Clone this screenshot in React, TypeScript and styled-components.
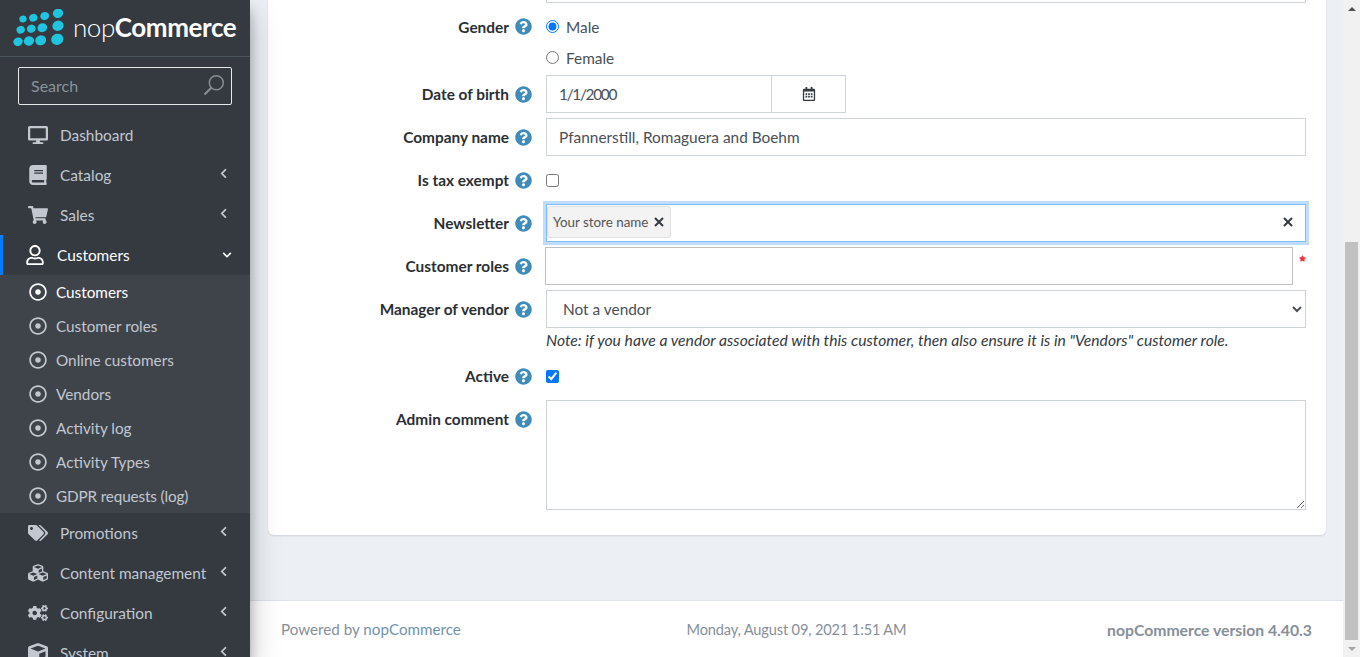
import React from 'react';
import styled, { createGlobalStyle } from 'styled-components';
import {
  FaDesktop, FaBook, FaShoppingCart, FaRegUser, FaRegDotCircle, FaTags, FaCubes, FaCogs, FaCube,
  FaChevronLeft, FaChevronDown, FaQuestionCircle, FaRegCalendarAlt, FaStar,
} from 'react-icons/fa';

const Global = createGlobalStyle`
  html, body { margin: 0; height: 100%; overflow: hidden; }
  body { font-family: "Lato", "Open Sans", sans-serif; font-size: 16px; color: #212529; background: #ecf0f5; }
  * { box-sizing: border-box; }
`;

const Shell = styled.div`display: flex; width: 1360px; height: 657px; overflow: hidden;`;
const Sidebar = styled.aside`
  width: 250px; flex: none; height: 657px; overflow: hidden; background: #343a40; color: #c2c7d0; z-index: 2;
  box-shadow: 0 14px 28px rgba(0,0,0,.25), 0 10px 10px rgba(0,0,0,.22);
`;
const Brand = styled.div`height: 57px; display: flex; align-items: center; padding-left: 13px; border-bottom: 1px solid #4b545c;`;
const BrandText = styled.span`
  font-size: 26px; color: #fff; font-weight: 300; letter-spacing: -.43px; margin: 0 0 3px 6px; line-height: 1;
  b { font-weight: 700; }
`;
const SearchBox = styled.div`
  margin: 10px 18px 10px; height: 38px; border: 1px solid #e6e8ea; border-radius: 2px; display: flex; align-items: center;
  justify-content: space-between; padding: 0 6px 2px 12px; color: #8a929a; font-size: 16px;
`;
const MenuRow = styled.div<{ $open?: boolean }>`
  height: 40px; display: flex; align-items: center; padding: 0 ${p => p.$open ? 18 : 21}px 0 ${p => p.$open ? 25 : 28}px;
  color: ${p => p.$open ? '#fff' : '#c2c7d0'};
  ${p => p.$open && 'box-shadow: inset 3px 0 0 #007bff;'}
`;
const MenuIcon = styled.span`width: 32px; flex: none; display: flex; align-items: center; font-size: 20px;`;
const MenuLabel = styled.span`flex: 1; white-space: nowrap; font-size: 15.4px;`;
const Caret = styled.span<{ $down?: boolean }>`
  display: flex; font-size: ${p => p.$down ? 10 : 11}px; color: ${p => p.$down ? '#fff' : '#c2c7d0'}; margin-top: ${p => p.$down ? 0 : -4}px;
`;
const SubMenu = styled.div`background: #3f444b;`;
const SubRow = styled.div<{ $active?: boolean }>`
  height: 34px; display: flex; align-items: center; padding-left: 29px; gap: 9px; font-size: 15.3px;
  color: ${p => p.$active ? '#fff' : '#c2c7d0'};
  svg { font-size: 18px; flex: none; }
`;
const SubText = styled.span<{ $tight?: boolean }>`
  ${p => p.$tight && 'letter-spacing: -.15px;'}
`;

const Main = styled.main`flex: 1; min-width: 0; display: flex; flex-direction: column; height: 657px;`;
const Content = styled.div`flex: 1; min-height: 0; overflow: hidden; display: flex; flex-direction: column; justify-content: flex-end; padding: 0 17px 65px 18px;`;
const Card = styled.section`
  flex: none; background: #fff; border-radius: 0 0 6px 6px; box-shadow: 0 1px 2px rgba(0,0,0,.12);
  padding: 0 20px 25px 0; display: flex; flex-direction: column;
`;
const Row = styled.div<{ $mb?: number }>`
  display: grid; grid-template-columns: 278px 1fr; margin-bottom: ${p => p.$mb ?? 5}px;
`;
const LabelCell = styled.div<{ $h?: number }>`
  height: ${p => p.$h ?? 38}px; display: flex; align-items: center; justify-content: flex-end; padding-right: 14px; gap: 6px;
  font-weight: 700; font-size: 15.4px; color: #2b2f33; white-space: nowrap;
  svg { color: #3f8cba; font-size: 17px; flex: none; }
`;
const Field = styled.div`min-width: 0; display: flex; flex-direction: column;`;
const Input = styled.div`
  height: 38px; border: 1px solid #ced4da; background: #fff; padding: 0 12px; display: flex; align-items: center;
  font-size: 15.4px; color: #495057;
`;
const RadioLine = styled.label`height: 31px; display: flex; align-items: center; gap: 7px; font-size: 15.4px; color: #495057;`;
const Native = styled.input`margin: 0; width: 13px; height: 13px; flex: none;`;
const CheckCell = styled.div`height: 38px; display: flex; align-items: center;`;
const DateGroup = styled.div`display: flex; width: 300px;`;
const DateInput = styled(Input)`flex: 1; border-right: 0; letter-spacing: -1.3px;`;
const DateBtn = styled.div`
  width: 75px; height: 38px; border: 1px solid #ced4da; display: flex; align-items: center; justify-content: center;
  font-size: 14px; color: #343a40;
`;
const Tagged = styled.div`
  height: 38px; border: 1px solid #80bdff; box-shadow: 0 0 0 3px rgba(0,123,255,.25); display: flex; align-items: center;
  justify-content: space-between; padding: 0 12px 2px 0; background: #fff;
`;
const Chip = styled.span`
  height: 32px; display: inline-flex; align-items: center; gap: 6px; padding: 0 6px 0 5px; font-size: 13.4px; color: #555;
  background: #f3f3f3; border: 1px solid #e1e1e1; border-radius: 3px;
`;
const RolesLine = styled.div`display: flex; gap: 6px;`;
const RolesBox = styled.div`width: 748px; margin-left: -1px; height: 38px; border: 1px solid #bfbfbf; background: #fff;`;
const Star = styled.span`color: #ff2a3c; font-size: 7px; line-height: 1; margin-top: 8px; display: flex;`;
const Select = styled.select`
  height: 38px; width: 100%; border: 1px solid #ced4da; background: #fff; padding: 0 6px 0 12px; font: inherit; font-size: 15.4px; color: #495057; border-radius: 0;
`;
const Note = styled.em`font-size: 15.7px; line-height: 24px; color: #343a40; margin-bottom: 5px; white-space: nowrap;`;
const TextArea = styled.textarea`height: 110px; width: 100%; display: block; border: 1px solid #ced4da; background: #fff; padding: 6px 12px; font: inherit;`;

const Footer = styled.footer`
  height: 57px; flex: none; background: #fff; border-top: 1px solid #dee2e6; padding: 0 31px; display: grid;
  grid-template-columns: 1fr auto 1fr; align-items: center; color: #869099; font-size: 15.2px;
  a { color: #6f93ad; }
`;
const FootDate = styled.span`font-size: 14.6px; letter-spacing: -.15px;`;
const FootRight = styled.strong`justify-self: end; font-weight: 700; font-size: 15.75px;`;

const Scrollbar = styled.div`
  width: 17px; flex: none; height: 657px; background: #f1f1f1; display: flex; flex-direction: column; padding: 0 2px;
`;
const ScrollArrow = styled.div<{ $down?: boolean }>`
  height: 17px; flex: none; display: flex; align-items: center; justify-content: center;
  &::before {
    content: ''; width: 0; height: 0; border-left: 4px solid transparent; border-right: 4px solid transparent;
    ${p => p.$down ? 'border-top: 4px solid #a3a3a3;' : 'border-bottom: 4px solid #505050;'}
  }
`;
const ScrollTrack = styled.div`flex: 1; display: flex; flex-direction: column; justify-content: flex-end;`;
const ScrollThumb = styled.div`height: 398px; background: #c1c1c1;`;

const dots = [
  [23, 19, 3.7], [33.3, 17.7, 4.2], [44.7, 16, 4.5], [58, 13.3, 5.2],
  [20.7, 29.7, 4.2], [31.3, 28.7, 4.5], [42.3, 27.7, 4.9], [58, 25.7, 5.7],
  [18, 41.7, 4.7], [29, 41, 5.2], [40.7, 40.3, 5.5], [57.3, 39.3, 6.2],
];
const Logo = () => (
  <svg width="54" height="38" viewBox="13 9 54 38" aria-hidden="true">
    <g fill="#1fc5df">
      {dots.map(([x, y, r], i) => <ellipse key={i} cx={x} cy={y} rx={r} ry={r * 0.9} transform={`rotate(-20 ${x} ${y})`} />)}
    </g>
  </svg>
);
const SearchGlyph = () => (
  <svg width="22" height="22" viewBox="0 0 22 22" fill="none" stroke="#8a8f94" strokeWidth="1.4" aria-hidden="true">
    <circle cx="13.3" cy="8.7" r="7" />
    <path d="M8.3 13.7 L1.5 20.5" strokeWidth="2" />
  </svg>
);
const Cross = () => (
  <svg width="10" height="10" viewBox="0 0 10 10" stroke="#343a40" strokeWidth="2" aria-hidden="true">
    <path d="M1 1L9 9M9 1L1 9" />
  </svg>
);

const top = [
  ['Dashboard', FaDesktop, false],
  ['Catalog', FaBook, true],
  ['Sales', FaShoppingCart, true],
] as const;
const bottom = [
  ['Promotions', FaTags],
  ['Content management', FaCubes],
  ['Configuration', FaCogs],
  ['System', FaCube],
] as const;
const subs = ['Customers', 'Customer roles', 'Online customers', 'Vendors', 'Activity log', 'Activity Types', 'GDPR requests (log)'];

const Label = ({ text, h }: { text: string; h?: number }) => (
  <LabelCell $h={h}>{text}<FaQuestionCircle /></LabelCell>
);

export default function App() {
  return (
    <Shell>
      <Global />
      <Sidebar>
        <Brand><Logo /><BrandText>nop<b>Commerce</b></BrandText></Brand>
        <SearchBox>Search<SearchGlyph /></SearchBox>
        {top.map(([t, I, c]) => (
          <MenuRow key={t}><MenuIcon><I /></MenuIcon><MenuLabel>{t}</MenuLabel>{c && <Caret><FaChevronLeft /></Caret>}</MenuRow>
        ))}
        <MenuRow $open><MenuIcon><FaRegUser /></MenuIcon><MenuLabel>Customers</MenuLabel><Caret $down><FaChevronDown /></Caret></MenuRow>
        <SubMenu>
          {subs.map((s, i) => <SubRow key={s} $active={i === 0}><FaRegDotCircle /><SubText $tight={i === 6}>{s}</SubText></SubRow>)}
        </SubMenu>
        {bottom.map(([t, I]) => (
          <MenuRow key={t}><MenuIcon><I /></MenuIcon><MenuLabel>{t}</MenuLabel><Caret><FaChevronLeft /></Caret></MenuRow>
        ))}
      </Sidebar>
      <Main>
        <Content>
          <Card>
            <Row $mb={8}><span /><Field><Input /></Field></Row>
            <Row $mb={2}>
              <Label text="Gender" h={31} />
              <Field>
                <RadioLine><Native type="radio" name="g" defaultChecked />Male</RadioLine>
                <RadioLine><Native type="radio" name="g" />Female</RadioLine>
              </Field>
            </Row>
            <Row>
              <Label text="Date of birth" />
              <Field><DateGroup><DateInput>1/1/2000</DateInput><DateBtn><FaRegCalendarAlt /></DateBtn></DateGroup></Field>
            </Row>
            <Row>
              <Label text="Company name" />
              <Field><Input>Pfannerstill, Romaguera and Boehm</Input></Field>
            </Row>
            <Row>
              <Label text="Is tax exempt" />
              <Field><CheckCell><Native type="checkbox" /></CheckCell></Field>
            </Row>
            <Row>
              <Label text="Newsletter" />
              <Field><Tagged><Chip>Your store name<Cross /></Chip><Cross /></Tagged></Field>
            </Row>
            <Row>
              <Label text="Customer roles" />
              <Field><RolesLine><RolesBox /><Star><FaStar /></Star></RolesLine></Field>
            </Row>
            <Row $mb={0}>
              <Label text="Manager of vendor" />
              <Field>
                <Select defaultValue="0"><option value="0">Not a vendor</option></Select>
                <Note>Note: if you have a vendor associated with this customer, then also ensure it is in "Vendors" customer role.</Note>
              </Field>
            </Row>
            <Row>
              <Label text="Active" />
              <Field><CheckCell><Native type="checkbox" defaultChecked /></CheckCell></Field>
            </Row>
            <Row $mb={0}>
              <Label text="Admin comment" />
              <Field><TextArea /></Field>
            </Row>
          </Card>
        </Content>
        <Footer>
          <span>Powered by <a>nopCommerce</a></span>
          <FootDate>Monday, August 09, 2021 1:51 AM</FootDate>
          <FootRight>nopCommerce version 4.40.3</FootRight>
        </Footer>
      </Main>
      <Scrollbar>
        <ScrollArrow />
        <ScrollTrack><ScrollThumb /></ScrollTrack>
        <ScrollArrow $down />
      </Scrollbar>
    </Shell>
  );
}
